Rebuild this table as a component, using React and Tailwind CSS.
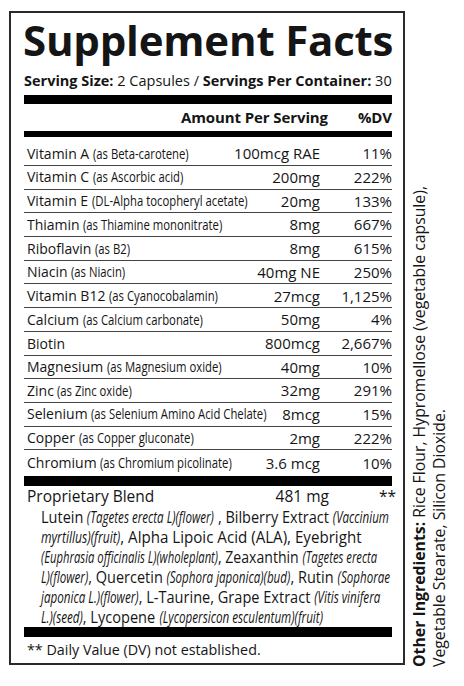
import React, { useLayoutEffect, useRef, useState } from 'react';

const rows = [
  { name: 'Vitamin A', note: '(as Beta-carotene)', amount: '100mcg RAE', dv: '11%' },
  { name: 'Vitamin C', note: '(as Ascorbic acid)', amount: '200mg', dv: '222%' },
  { name: 'Vitamin E', note: '(DL-Alpha tocopheryl acetate)', amount: '20mg', dv: '133%' },
  { name: 'Thiamin', note: '(as Thiamine mononitrate)', amount: '8mg', dv: '667%' },
  { name: 'Riboflavin', note: '(as B2)', amount: '8mg', dv: '615%' },
  { name: 'Niacin', note: '(as Niacin)', amount: '40mg NE', dv: '250%' },
  { name: 'Vitamin B12', note: '(as Cyanocobalamin)', amount: '27mcg', dv: '1,125%' },
  { name: 'Calcium', note: '(as Calcium carbonate)', amount: '50mg', dv: '4%' },
  { name: 'Biotin', note: '', amount: '800mcg', dv: '2,667%' },
  { name: 'Magnesium', note: '(as Magnesium oxide)', amount: '40mg', dv: '10%' },
  { name: 'Zinc', note: '(as Zinc oxide)', amount: '32mg', dv: '291%' },
  { name: 'Selenium', note: '(as Selenium Amino Acid Chelate)', amount: '8mcg', dv: '15%' },
  { name: 'Copper', note: '(as Copper gluconate)', amount: '2mg', dv: '222%' },
  { name: 'Chromium', note: '(as Chromium picolinate)', amount: '3.6 mcg', dv: '10%' },
];

// no condensed face installed, so squeeze horizontally and give back the freed width
const Squeeze = ({ children, factor, className }) => {
  const ref = useRef(null);
  const [w, setW] = useState(0);
  useLayoutEffect(() => {
    if (ref.current) setW(ref.current.offsetWidth);
  }, []);
  return (
    <span
      ref={ref}
      className={`inline-block origin-left whitespace-nowrap ${className}`}
      style={{ marginRight: -w * (1 - factor) }}
    >
      {children}
    </span>
  );
};

const Note = ({ children }) => (
  <Squeeze factor={0.78} className="scale-x-[0.78] text-[14.5px]">
    {children}
  </Squeeze>
);

// latin names inside the blend; Fit below takes care of the freed width
const Latin = ({ children }) => (
  <span data-f="0.8" className="inline-block origin-left scale-x-[0.8] italic text-[15.5px]">
    {children}
  </span>
);

// the blend lines break where the label breaks them, so fit each to its measured length
const Fit = ({ width, children }) => {
  const ref = useRef(null);
  useLayoutEffect(() => {
    const el = ref.current;
    el.querySelectorAll('[data-f]').forEach((s) => {
      const f = parseFloat(s.dataset.f);
      s.style.marginRight = `${-s.offsetWidth * (1 - f)}px`;
    });
    el.style.transform = `scaleX(${width / el.offsetWidth})`;
  }, [width]);
  return (
    <div ref={ref} className="w-max origin-left whitespace-nowrap">
      {children}
    </div>
  );
};

const Row = ({ row, index }) => {
  const first = index === 0;
  const last = index === rows.length - 1;
  const height = first ? 'h-[29px] pt-[5px]' : last ? 'h-[25.6px]' : 'h-[23.7px]';
  return (
    <div className={`flex items-center ${height} ${last ? '' : 'border-b border-[#444]'}`}>
      <div className="flex-1 min-w-0 pl-[3px] text-[14px] whitespace-nowrap">
        {row.name}
        {row.note && (
          <>
            {' '}
            <Note>{row.note}</Note>
          </>
        )}
      </div>
      <div className="w-[90px] text-right text-[15px] pr-[1px]">{row.amount}</div>
      <div className="w-[71px] text-right text-[15px]">{row.dv}</div>
    </div>
  );
};

const Blend = () => (
  <div className="pl-[17px] text-[15.5px] leading-[20px]">
    <Fit width={348}>
      Lutein <Latin>(Tagetes erecta L)(flower)</Latin> , Bilberry Extract <Latin>(Vaccinium</Latin>
    </Fit>
    <Fit width={321}>
      <Latin>myrtillus)(fruit)</Latin>, Alpha Lipoic Acid (ALA), Eyebright
    </Fit>
    <Fit width={336}>
      <Latin>(Euphrasia officinalis L)(wholeplant)</Latin>, Zeaxanthin <Latin>(Tagetes erecta</Latin>
    </Fit>
    <Fit width={349}>
      <Latin>L)(flower)</Latin>, Quercetin <Latin>(Sophora japonica)(bud)</Latin>, Rutin <Latin>(Sophorae</Latin>
    </Fit>
    <Fit width={339}>
      <Latin>japonica L.)(flower)</Latin>, L-Taurine, Grape Extract <Latin>(Vitis vinifera</Latin>
    </Fit>
    <Fit width={282}>
      <Latin>L.)(seed)</Latin>, Lycopene <Latin>(Lycopersicon esculentum)(fruit)</Latin>
    </Fit>
  </div>
);

export default function App() {
  return (
    <div className="w-[464px] h-[686px] bg-white flex items-start font-['Open_Sans',sans-serif] text-[#151515]">
      {/* Facts panel */}
      <div className="ml-[9px] mt-[11px] w-[396px] h-[654px] border-2 border-[#2a2a2a] pl-[13px] pr-[11px] flex flex-col">
        <h1 className="h-[53px] leading-[53px] text-[42px] font-bold tracking-[-0.2px] whitespace-nowrap -ml-[1px]">
          Supplement Facts
        </h1>
        <div className="h-[29px] leading-[29px] text-[14.5px] whitespace-nowrap">
          <b>Serving Size:</b> 2 Capsules / <b>Servings Per Container:</b> 30
        </div>
        <div className="h-[9px] bg-black" />

        <div className="flex items-center justify-end h-[27px] text-[15px] font-bold tracking-[-0.1px]">
          <span className="pr-[1px]">Amount Per Serving</span>
          <span className="w-[63px] text-right">%DV</span>
        </div>
        <div className="h-[6px] bg-black" />

        {rows.map((row, i) => (
          <Row key={row.name} row={row} index={i} />
        ))}

        <div className="h-[10px] bg-black" />

        <div className="flex items-center h-[21px] text-[15.5px]">
          <div className="flex-1 pl-[3px]">Proprietary Blend</div>
          <div className="w-[94px] text-right">481 mg</div>
          <div className="w-[67px] text-right -mr-[4px]">**</div>
        </div>
        <Blend />

        <div className="h-[10px] bg-black" />
        <div className="flex-1 flex items-center pl-[3px] text-[14.3px]">
          ** Daily Value (DV) not established.
        </div>
      </div>

      {/* Other ingredients, rotated */}
      <div className="ml-[4px] mt-[150px] h-[517px] w-[40px] [writing-mode:vertical-rl] rotate-180 text-[15.8px] leading-[20px] whitespace-nowrap">
        <b>Other Ingredients:</b> Rice Flour, Hypromellose (vegetable capsule),
        <br />
        Vegetable Stearate, Silicon Dioxide.
      </div>
    </div>
  );
}
